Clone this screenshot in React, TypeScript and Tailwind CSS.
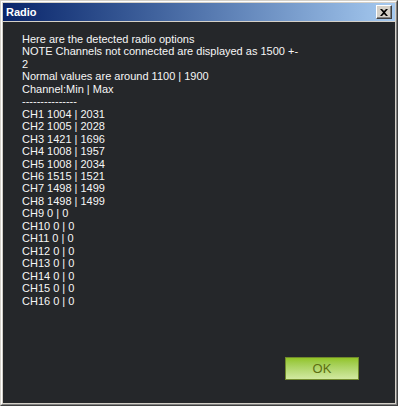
// Radio calibration dialog: classic Windows frame, dark client area with a plain
// text report of channel min/max values and a green OK button bottom-right.

const LINES = [
  "Here are the detected radio options",
  "NOTE Channels not connected are displayed as 1500 +-",
  "2",
  "Normal values are around 1100 | 1900",
  "Channel:Min | Max",
  "---------------",
  "CH1 1004 | 2031",
  "CH2 1005 | 2028",
  "CH3 1421 | 1696",
  "CH4 1008 | 1957",
  "CH5 1008 | 2034",
  "CH6 1515 | 1521",
  "CH7 1498 | 1499",
  "CH8 1498 | 1499",
  "CH9 0 | 0",
  "CH10 0 | 0",
  "CH11 0 | 0",
  "CH12 0 | 0",
  "CH13 0 | 0",
  "CH14 0 | 0",
  "CH15 0 | 0",
  "CH16 0 | 0",
];

export default function App() {
  return (
    <div className="h-[406px] w-[398px] border border-t-[#d4d0c8] border-l-[#d4d0c8] border-r-[#404040] border-b-[#404040] font-['Liberation_Sans',Arial,sans-serif]">
      <div className="flex h-full w-full flex-col border border-t-white border-l-white border-r-[#808080] border-b-[#808080] bg-[#d4d0c8] p-px">
        {/* Title bar */}
        <div className="flex h-[18px] shrink-0 items-center justify-between bg-gradient-to-r from-[#0a246a] to-[#a6caf0] pl-[3px] pr-[3px]">
          <span className="text-[11px] font-bold leading-none text-white">Radio</span>
          <button className="flex h-[14px] w-[16px] items-center justify-center border border-t-white border-l-white border-r-[#404040] border-b-[#404040] bg-[#d4d0c8] shadow-[inset_-1px_-1px_0_#808080]">
            <svg viewBox="0 0 8 7" className="h-[7px] w-[8px]" aria-hidden>
              <path d="M0 0h2l2 2 2-2h2L5 3.5 8 7H6L4 5 2 7H0l3-3.5Z" fill="#000" />
            </svg>
          </button>
        </div>

        {/* Client area */}
        <div className="mt-px flex flex-1 flex-col bg-[#25272a]">
          <div className="pl-[19px] pt-[11px] text-[11px] leading-[12.45px] text-[#f6f6f6]">
            {LINES.map((l, i) => (
              <div key={i} className="whitespace-pre">{l}</div>
            ))}
          </div>
          <div className="mt-auto flex justify-end pb-[23px] pr-[36px]">
            <button className="flex h-[23px] w-[74px] items-center justify-center border border-[#708a2c] bg-gradient-to-b from-[#92c424] to-[#d2e9a0] text-[13px] text-[#5d6e12]">
              OK
            </button>
          </div>
        </div>
      </div>
    </div>
  );
}
